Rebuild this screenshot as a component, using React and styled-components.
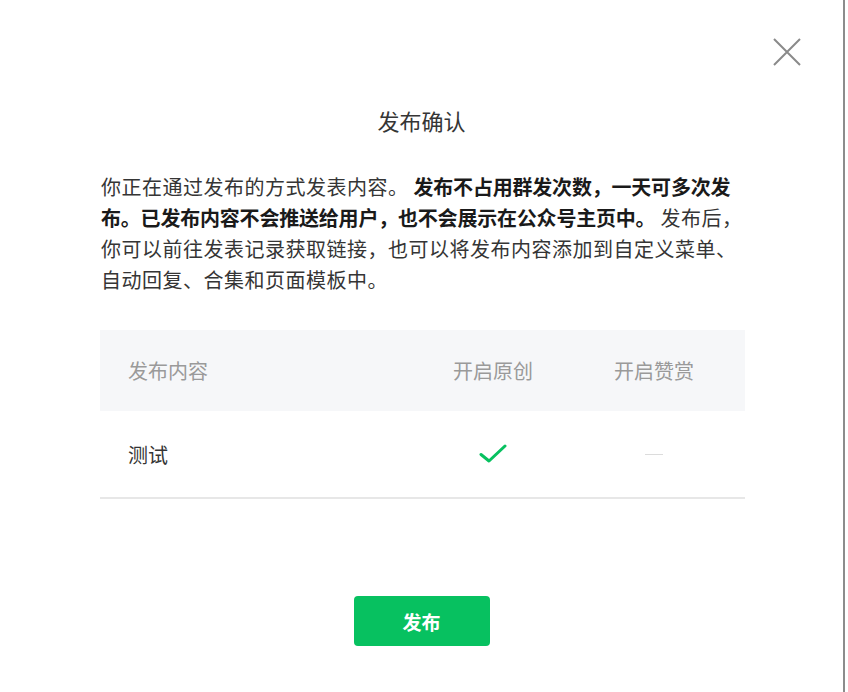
import React from 'react';
import styled, { createGlobalStyle } from 'styled-components';

const GlobalStyle = createGlobalStyle`
    html, body {
        margin: 0;
        padding: 0;
        background: #ffffff;
    }
    body {
        font-family: "Noto Sans CJK SC", "Noto Sans", "Liberation Sans", sans-serif;
        color: #353535;
    }
`

const columns = [
    { key: 'content', title: '发布内容' },
    { key: 'original', title: '开启原创' },
    { key: 'reward', title: '开启赞赏' },
];

const rows = [
    { title: '测试', original: true, reward: false },
];

function CheckIcon()
{
    return (
        <svg width="28" height="22" viewBox="0 0 28 22" fill="none">
            <path d="M2 11.5 L10 18 L26 3" stroke="#07c160" strokeWidth="3" strokeLinecap="round" strokeLinejoin="round" />
        </svg>
    )
}

function CloseIcon()
{
    return (
        <svg width="28" height="28" viewBox="0 0 28 28" fill="none">
            <path d="M1 1 L27 27 M27 1 L1 27" stroke="#8a8a8a" strokeWidth="2" />
        </svg>
    )
}

function App()
{
  return (
    <>
      <GlobalStyle />
      <Dialog>
          <Close aria-label="关闭"><CloseIcon /></Close>
          <Title>发布确认</Title>
          <Desc>
              你正在通过发布的方式发表内容。 <strong>发布不占用群发次数，一天可多次发布。已发布内容不会推送给用户，也不会展示在公众号主页中。</strong> 发布后，你可以前往发表记录获取链接，也可以将发布内容添加到自定义菜单、自动回复、合集和页面模板中。
          </Desc>
          <Table>
              <HeadRow>
                  {columns.map((c, i) => (
                      <HeadCell key={c.key} $first={i === 0}>{c.title}</HeadCell>
                  ))}
              </HeadRow>
              {rows.map((r) => (
                  <BodyRow key={r.title}>
                      <Cell $first>{r.title}</Cell>
                      <Cell>{r.original ? <CheckIcon /> : <Dash />}</Cell>
                      <Cell>{r.reward ? <CheckIcon /> : <Dash />}</Cell>
                  </BodyRow>
              ))}
          </Table>
          <Footer>
              <PrimaryButton>发布</PrimaryButton>
          </Footer>
      </Dialog>
    </>
  )
}

export default App;

const Dialog = styled.div`
    position: relative;
    box-sizing: border-box;
    width: 845px;
    height: 692px;
    padding: 105px 100px 0 100px;
    background: #ffffff;
    border-right: 2px solid #8c8c8c;
    display: flex;
    flex-direction: column;
`

const Close = styled.button`
    position: absolute;
    top: 38px;
    right: 42px;
    width: 28px;
    height: 28px;
    padding: 0;
    border: 0;
    background: none;
    display: flex;
    cursor: pointer;
`

const Title = styled.h3`
    margin: 0;
    text-align: center;
    font-size: 22px;
    font-weight: 400;
    line-height: 30px;
    color: #353535;
`

const Desc = styled.p`
    margin: 36px -5px 0 0;
    padding-left: 1px;
    font-size: 20px;
    letter-spacing: 0.5px;
    line-height: 31px;
    color: #353535;

    strong {
        font-weight: 700;
        letter-spacing: -0.2px;
        color: #1a1a1a;
    }
`

const Table = styled.div`
    margin-top: 35px;
    width: 645px;
`

const HeadRow = styled.div`
    display: grid;
    grid-template-columns: 312px 162px 160px 11px;
    height: 81px;
    background: #f6f7f9;
`

const HeadCell = styled.div`
    display: flex;
    align-items: center;
    justify-content: ${(p) => (p.$first ? 'flex-start' : 'center')};
    padding-left: ${(p) => (p.$first ? '28px' : '0')};
    font-size: 20px;
    color: #9a9a9a;
`

const BodyRow = styled.div`
    display: grid;
    grid-template-columns: 312px 162px 160px 11px;
    height: 86px;
    border-bottom: 2px solid #e7e7e7;
`

const Cell = styled.div`
    display: flex;
    align-items: center;
    justify-content: ${(p) => (p.$first ? 'flex-start' : 'center')};
    padding-left: ${(p) => (p.$first ? '28px' : '0')};
    font-size: 20px;
    color: #353535;
`

const Dash = styled.span`
    display: block;
    width: 18px;
    height: 1px;
    background: #dcdcdc;
`

const Footer = styled.div`
    display: flex;
    justify-content: center;
    margin-top: 97px;
`

const PrimaryButton = styled.button`
    width: 136px;
    height: 50px;
    border: 0;
    border-radius: 4px;
    background: #07c160;
    color: #ffffff;
    font-family: inherit;
    font-size: 19px;
    font-weight: 700;
    cursor: pointer;
`
